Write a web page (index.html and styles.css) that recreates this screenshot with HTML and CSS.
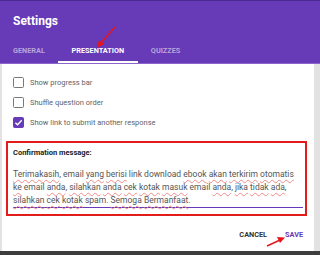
FILE: index.html
```html
<html>
   <head>
      <title>Settings</title>
      <meta charset="utf-8">
      <link rel="stylesheet" href="styles.css">
   </head>

   <body>
      <div class="dialog">
         <div class="head">
            <div class="title">Settings</div>
            <div class="tabs">
               <div class="tab">General</div>
               <div class="tab active">Presentation</div>
               <div class="tab">Quizzes</div>
            </div>
         </div>
         <div class="content">
            <div class="check"><span class="box"></span>Show progress bar</div>
            <div class="check"><span class="box"></span>Shuffle question order</div>
            <div class="check"><span class="box on"><svg viewBox="0 0 12 12" width="11" height="11"><path d="M2.6 6.2 L5 8.5 L9.5 3.6" fill="none" stroke="#fff" stroke-width="1.5"/></svg></span>Show link to submit another response</div>
            <div class="confirm">
               <div class="label">Confirmation message:</div>
               <div class="msg">
                  <span class="sp">Terimakasih</span>, email <span class="sp">yang</span> <span class="sp">berisi</span> link download <span class="sp">ebook</span> <span class="sp">akan</span> <span class="sp">terkirim</span> <span class="sp">otomatis</span><br>
                  <span class="sp">ke</span> email <span class="sp">anda</span>, <span class="sp">silahkan</span> <span class="sp">anda</span> <span class="sp">cek</span> <span class="sp">kotak</span> <span class="sp">masuk</span> email <span class="sp">anda</span>, <span class="sp">jika</span> <span class="sp">tidak</span> <span class="sp">ada</span>,<br>
                  <span class="sp">silahkan</span> <span class="sp">cek</span> <span class="sp">kotak</span> spam. <span class="sp">Semoga</span> <span class="sp">Bermanfaat</span>.
               </div>
            </div>
            <div class="actions">
               <span class="btn">Cancel</span>
               <span class="btn save">Save</span>
            </div>
         </div>
      </div>
      <div class="bar"></div>

      <svg class="arrow a1" width="30" height="30" viewBox="0 0 30 30">
         <path d="M22 2 L7 19" stroke="#e8141c" stroke-width="1.4" fill="none"/>
         <path d="M4 23 L6 15 L11 19 Z" fill="#e8141c"/>
      </svg>
      <svg class="arrow a2" width="24" height="16" viewBox="0 0 24 16">
         <path d="M2 13 L15 7" stroke="#e8141c" stroke-width="1.4" fill="none"/>
         <path d="M20 4.5 L12 4 L15 10 Z" fill="#e8141c"/>
      </svg>
   </body>
</html>
```

FILE: styles.css
```css
body {margin: 0; width: 320px; height: 255px; overflow: hidden; position: relative; background: #e2e2e2; font-family: Roboto, "Liberation Sans", sans-serif;}
.dialog {height: 251px; display: flex; flex-direction: column;}
.head {background: #673ab7; border-top: 1px solid #4a2a92; border-bottom: 1px solid #8a66cc; box-sizing: border-box; height: 64px;}
.title {color: #fff; font-weight: bold; font-size: 12px; padding: 14px 0 0 13px; height: 26px; line-height: 12px;}
.tabs {display: flex; height: 23px;}
.tab {padding: 0 13px; font-size: 7.3px; font-weight: bold; text-transform: uppercase; color: #b8a4dc; line-height: 20px; box-sizing: border-box;}
.tab.active {color: #fff; border-bottom: 2px solid #fff; height: 22px; width: 80px; text-align: center; padding: 0;}
.content {flex: 1; background: #fff; margin: 0 6px 0 2px; padding: 13px 0 0 11px; display: flex; flex-direction: column;}
.check {height: 20px; display: flex; align-items: flex-start; font-size: 7.5px; color: #5f6368; line-height: 11px;}
.box {width: 11px; height: 11px; box-sizing: border-box; border: 1.5px solid #777; border-radius: 1.5px; margin-right: 6px; flex: none; display: flex; align-items: center; justify-content: center;}
.box.on {background: #673ab7; border-color: #673ab7;}
.box.on svg {flex: none;}
.confirm {margin: 4px 0 0 -7px; width: 301px; height: 75px; box-sizing: border-box; border: 2px solid #e21b1b; padding: 5px 2px 0 5px;}
.label {font-size: 7.5px; font-weight: bold; color: #222; line-height: 10px;}
.msg {margin-top: 10px; font-size: 8.5px; color: #555; line-height: 13px; border-bottom: 1.5px solid #673ab7; white-space: nowrap;}
.sp {text-decoration: underline wavy #ef8a88; text-decoration-thickness: 1px; text-underline-offset: 1.5px;}
.actions {display: flex; justify-content: flex-end; gap: 18px; padding: 14px 11px 0 0;}
.btn {font-size: 7.3px; font-weight: bold; text-transform: uppercase; color: #333; line-height: 10px;}
.btn.save {color: #673ab7;}
.bar {height: 4px; background: #3d3d3d;}
.arrow {position: absolute;}
.a1 {left: 93px; top: 25px;}
.a2 {left: 265px; top: 233px;}
```
